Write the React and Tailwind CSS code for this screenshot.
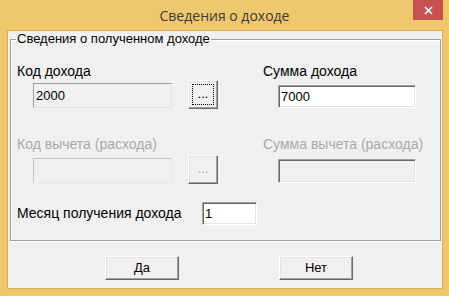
import React from "react"

const sunken = "border border-t-[#a0a0a0] border-l-[#a0a0a0] border-r-white border-b-white shadow-[inset_1px_1px_0_#696969,inset_-1px_-1px_0_#e3e3e3]"
const raised = "border border-t-white border-l-white border-r-[#696969] border-b-[#696969] shadow-[inset_-1px_-1px_0_#a0a0a0,inset_1px_1px_0_#e3e3e3] bg-[#f0f0f0]"

const Field = ({ value, className }) => (
	<div className={"flex items-center pl-[2px] leading-none " + className}>{value}</div>
)

export default function App() {
	return (
		<div className="w-[449px] h-[296px] bg-[#efc76c] flex flex-col font-['Liberation_Sans',Arial,sans-serif] text-[13px] text-black">

			{/* Title bar */}
			<div className="h-[30px] flex-shrink-0 grid grid-cols-[1fr_auto_1fr]">
				<div />
				<div className="pt-[6px] font-['Open_Sans',sans-serif] text-[14px] leading-[20px] text-[#3a3a3a]">
					Сведения о доходе
				</div>
				<div className="flex justify-end pr-[6px]">
					<div className="w-[30px] h-[20px] bg-[#c75050] flex items-center justify-center">
						<svg className="w-[9px] h-[9px]" viewBox="0 0 9 9" fill="none" stroke="white" strokeWidth="1.6">
							<path d="M1 1l7 7M8 1l-7 7" />
						</svg>
					</div>
				</div>
			</div>

			{/* Client area */}
			<div className="ml-[7px] mr-[6px] mb-[7px] flex-1 border border-[#d7ae55] bg-[#f0f0f0] flex flex-col">

				<fieldset className="ml-[2px] mr-[1px] h-[210px] border border-[#a0a0a0] shadow-[1px_1px_0_#fff,inset_1px_1px_0_#fff] px-0 pb-0">
					<legend className="ml-[5px] px-[1px] leading-[16px] -mt-[1px]">Сведения о полученном доходе</legend>

					<div className="flex flex-col pl-[6px] text-[14px]">

						{/* Income code / sum labels */}
						<div className="mt-[16px] h-[16px] leading-[16px] flex">
							<div className="w-[246px]">Код дохода</div>
							<div>Сумма дохода</div>
						</div>

						<div className="h-[30px] flex items-start text-[13px]">
							<Field value="2000" className="ml-[16px] mt-[4px] w-[139px] h-[25px] border border-t-[#a0a0a0] border-l-[#a0a0a0] border-r-[#e3e3e3] border-b-[#e3e3e3]" />
							<div className={"ml-[16px] mt-[1px] w-[30px] h-[29px] p-[3px] flex " + raised}>
								<div className="flex-1 border border-dotted border-black flex items-center justify-center leading-none pb-[3px]">...</div>
							</div>
							<Field value="7000" className={"ml-[60px] mt-[6px] w-[138px] h-[23px] bg-white " + sunken} />
						</div>

						{/* Deduction labels (disabled) */}
						<div className="mt-[27px] h-[16px] leading-[16px] flex text-[#a9a9a9]">
							<div className="w-[246px]">Код вычета (расхода)</div>
							<div>Сумма вычета (расхода)</div>
						</div>

						<div className="mt-[2px] h-[30px] flex items-start text-[13px]">
							<div className="ml-[16px] mt-[4px] w-[139px] h-[25px] border border-t-[#c4c4c4] border-l-[#c4c4c4] border-r-[#e8e8e8] border-b-[#e8e8e8]" />
							<div className={"ml-[16px] mt-[1px] w-[30px] h-[29px] flex items-center justify-center leading-none pb-[3px] text-[#a9a9a9] " + raised}>...</div>
							<div className={"ml-[60px] mt-[5px] w-[138px] h-[24px] " + sunken} />
						</div>

						{/* Month */}
						<div className="mt-[18px] h-[23px] flex items-center">
							<div className="w-[185px]">Месяц получения дохода</div>
							<Field value="1" className={"w-[55px] h-[23px] bg-white text-[13px] " + sunken} />
						</div>
					</div>
				</fieldset>

				{/* Buttons */}
				<div className="mt-[15px] flex pl-[97px] gap-[100px]">
					<div className={"w-[74px] h-[24px] flex items-center justify-center " + raised}>Да</div>
					<div className={"w-[74px] h-[24px] flex items-center justify-center " + raised}>Нет</div>
				</div>
			</div>
		</div>
	)
}
